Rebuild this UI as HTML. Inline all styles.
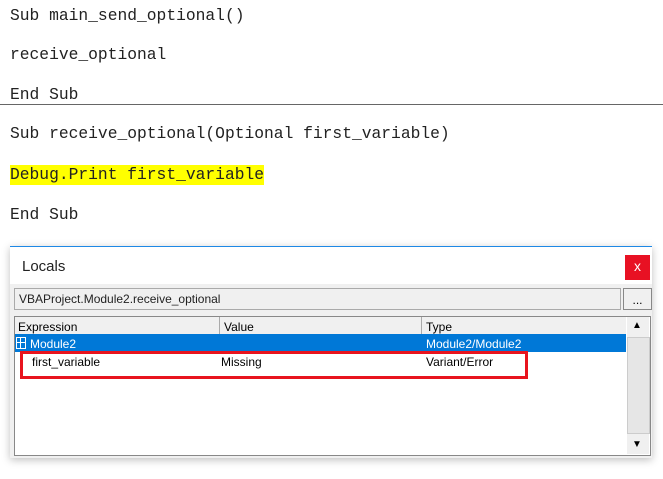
<!DOCTYPE html>
<html><head><style>
body{margin:0;width:663px;height:479px;background:#fff;position:relative;overflow:hidden;font-family:"Liberation Sans",sans-serif}
.c{position:absolute;left:10px;font-family:"Liberation Mono",monospace;font-size:16.3px;color:#222;white-space:pre;line-height:20px}
.a{position:absolute}
.t{position:absolute;font-size:12px;color:#000;white-space:pre}
</style></head><body>
<div class="c" style="top:6px">Sub main_send_optional()</div>
<div class="c" style="top:45px">receive_optional</div>
<div class="c" style="top:85px">End Sub</div>
<div class="a" style="left:0;top:104px;width:663px;height:1px;background:#666"></div>
<div class="c" style="top:124px">Sub receive_optional(Optional first_variable)</div>
<div class="c" style="top:165px;background:#ffff00;height:20px">Debug.Print first_variable</div>
<div class="c" style="top:205px">End Sub</div>

<div class="a" style="left:10px;top:246px;width:642px;height:211px;background:#f0f0f0;border-top:1px solid #1e88e5;box-shadow:0 2px 8px rgba(0,0,0,.25)"></div>
<div class="a" style="left:10px;top:247px;width:642px;height:37px;background:#fff"></div>
<div class="t" style="left:22px;top:258px;font-size:15px;color:#222">Locals</div>
<div class="a" style="left:625px;top:255px;width:25px;height:25px;background:#e81123;color:#fff;font-size:14px;text-align:center;line-height:23px">x</div>
<div class="a" style="left:14px;top:288px;width:605px;height:20px;background:#f0f0f0;border:1px solid #aaa"></div>
<div class="t" style="left:19px;top:292px;color:#222">VBAProject.Module2.receive_optional</div>
<div class="a" style="left:623px;top:288px;width:27px;height:20px;background:#f0f0f0;border:1px solid #888;font-size:12px;text-align:center;line-height:22px">...</div>
<div class="a" style="left:14px;top:316px;width:635px;height:138px;background:#fff;border:1px solid #888"></div>
<div class="a" style="left:15px;top:317px;width:611px;height:17px;background:#f0f0f0;border-bottom:1px solid #ddd"></div>
<div class="a" style="left:219px;top:317px;width:1px;height:17px;background:#aaa"></div>
<div class="a" style="left:421px;top:317px;width:1px;height:17px;background:#aaa"></div>
<div class="t" style="left:18px;top:320px">Expression</div>
<div class="t" style="left:224px;top:320px">Value</div>
<div class="t" style="left:426px;top:320px">Type</div>
<div class="a" style="left:15px;top:334px;width:611px;height:18px;background:#0078d7"></div>
<div class="a" style="left:16px;top:337px;width:8px;height:10px;border:1px solid #fff;background:#0078d7"></div>
<div class="a" style="left:20px;top:338px;width:1px;height:10px;background:#fff"></div>
<div class="a" style="left:17px;top:342px;width:8px;height:1px;background:#fff"></div>
<div class="t" style="left:30px;top:337px;color:#fff">Module2</div>
<div class="t" style="left:426px;top:337px;color:#fff">Module2/Module2</div>
<div class="t" style="left:32px;top:355px">first_variable</div>
<div class="t" style="left:221px;top:355px">Missing</div>
<div class="t" style="left:426px;top:355px">Variant/Error</div>
<div class="a" style="left:20px;top:351px;width:502px;height:22px;border:3px solid #e8141e"></div>
<div class="a" style="left:627px;top:317px;width:22px;height:137px;background:#f0f0f0"></div>
<div class="a" style="left:627px;top:337px;width:21px;height:95px;background:#e6e6e6;border:1px solid #ccc"></div>
<div class="t" style="left:632px;top:320px;font-size:10px">▲</div>
<div class="t" style="left:632px;top:439px;font-size:10px">▼</div>
</body></html>
